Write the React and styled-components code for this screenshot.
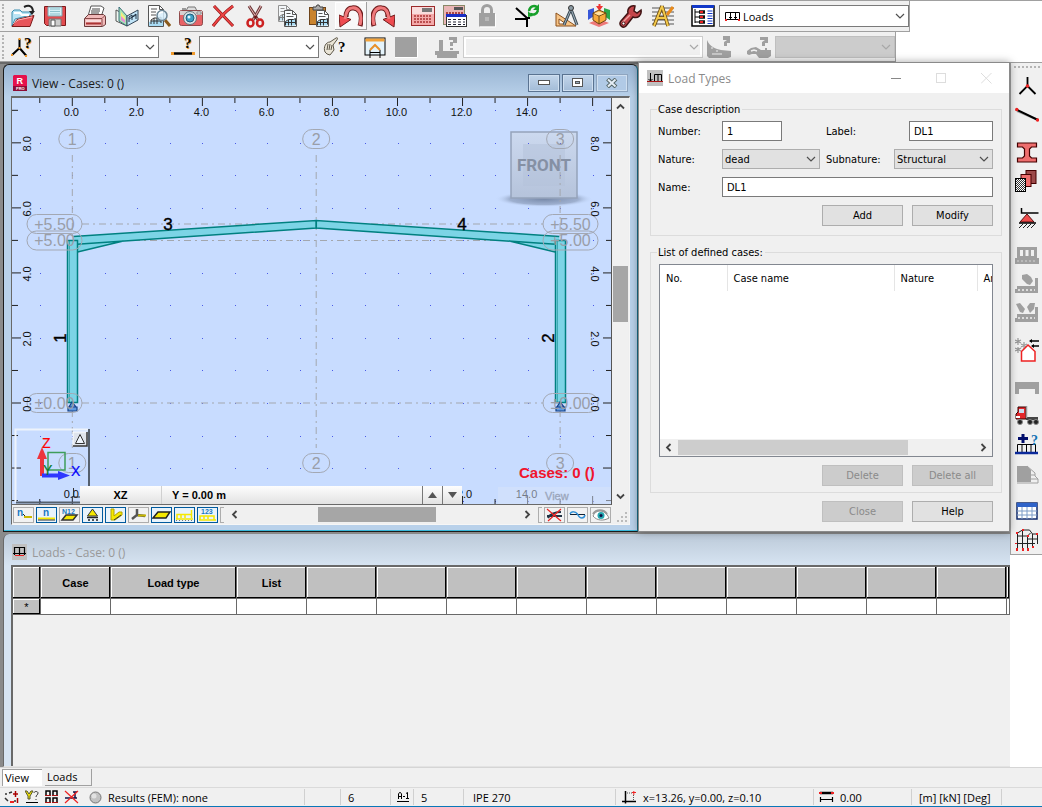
import React, { useState } from 'react'
import styled, { createGlobalStyle } from 'styled-components'

const GlobalStyle = createGlobalStyle`
  * { box-sizing: border-box; }
  body {
    margin: 0;
    background: #fff;
    color: #000;
    font-family: "Open Sans", "Noto Sans", sans-serif;
    font-size: 11px;
  }
  button, input, select { font: inherit; color: inherit; }
  svg { display: block; }
`

const Page = styled.div`
  display: flex;
  flex-direction: column;
  min-height: 100vh;
  border-top: 1px solid #a0a0a0;
`

/* ---------- toolbars ---------- */

const Toolbar = styled.div`
  display: flex;
  align-items: center;
  align-self: flex-start;
  height: ${p => p.$height}px;
  background: #f0f0f0;
  border-right: 1px solid #a0a0a0;
  border-bottom: 1px solid #a0a0a0;
`

const Grip = styled.div`
  width: 5px;
  height: 24px;
  border-left: 2px dotted #b4b4b4;
  margin-left: 2px;
`

const Group = styled.div`
  display: flex;
  align-items: center;
  margin-right: ${p => (p.$last ? 0 : 8)}px;
`

const ToolButton = styled.button`
  display: flex;
  align-items: center;
  justify-content: center;
  width: 32px;
  height: 28px;
  padding: 0;
  border: 0;
  background: ${p => (p.$raised ? '#f8f8f8' : 'transparent')};
  box-shadow: ${p => (p.$raised ? 'inset -1px -1px #a0a0a0, inset 1px 1px #fff' : 'none')};
`

const SelectBox = styled.div`
  position: relative;
  width: ${p => p.$width}px;
  height: ${p => p.$height || 22}px;
`

const SelectField = styled.select`
  width: 100%;
  height: 100%;
  appearance: none;
  border: 1px solid ${p => p.$border || '#7a7a7a'};
  border-radius: 0;
  padding: 0 20px 0 ${p => p.$indent || 3}px;
  background: ${p => p.$fill || '#fff'};
  box-shadow: ${p => (p.$inset ? 'inset 0 0 0 2px #fff' : 'none')};
  opacity: 1;
`

const SelectArrow = styled.svg`
  position: absolute;
  right: 4px;
  top: 50%;
  margin-top: -4px;
  pointer-events: none;
`

const SelectIcon = styled.span`
  position: absolute;
  left: 6px;
  top: 6px;
  pointer-events: none;
`

function Select({ width, height, label, value, icon, indent, disabled, fill, border, inset, id }) {
  return (
    <SelectBox $width={width} $height={height}>
      <SelectField id={id} aria-label={label} disabled={disabled} $fill={fill} $border={border} $indent={indent} $inset={inset}>
        <option>{value}</option>
      </SelectField>
      {icon && <SelectIcon>{icon}</SelectIcon>}
      <SelectArrow width="10" height="8" viewBox="0 0 10 8">
        <path d="M1 2l4 4 4-4" fill="none" stroke={disabled ? '#a8a8a8' : '#505050'} strokeWidth="1.2" />
      </SelectArrow>
    </SelectBox>
  )
}

/* ---------- icons ---------- */

function Glyph({ size = 24, children }) {
  return <svg width={size} height={size} viewBox="0 0 24 24" aria-hidden="true">{children}</svg>
}

// portal frame stamp that is printed on most of the document icons
const Frame = ({ x, y }) => (
  <path d={`M${x} ${y + 7}v-4l3-2h5l2-1v6M${x + 3} ${y + 1}v6M${x + 6} ${y + 1}v6M${x} ${y + 4}h10`} fill="none" stroke="#333" strokeWidth="1" />
)

const OpenIcon = () => (
  <Glyph>
    <path d="M1 22V8l2-2h6l2 2h9v3l-16 4z" fill="#b9e4f5" stroke="#3c8fb0" />
    <path d="M3 9h6l2 2h7" fill="none" stroke="#fff" strokeWidth="2" />
    <path d="M1 22.500l5-7 17-4-4 11z" fill="#e8565b" stroke="#7c1a1a" />
    <path d="M2 20l5-4 14-3" stroke="#ffb6b6" fill="none" />
    <path d="M13 3c6-3 9 0 9 5" fill="none" stroke="#222" strokeWidth="2" />
    <path d="M18 7h6l-3 4z" fill="#222" />
  </Glyph>
)
const SaveIcon = () => (
  <Glyph>
    <path d="M1.500 2.500h21v19H3.500l-2-2z" fill="#e34c50" stroke="#7c1a1a" />
    <path d="M5 3h14v9H5z" fill="#d5f0f6" stroke="#7ba7b0" />
    <path d="M7 5h10M7 7.500h10M7 10h10" stroke="#8cc0cc" />
    <path d="M6 15h12v7H6z" fill="#ccc" stroke="#777" />
    <path d="M8 16h4v6H8z" fill="#fff" stroke="#555" />
  </Glyph>
)
const PrintIcon = () => (
  <Glyph>
    <path d="M5 12l3-10h10l3 2-3 9z" fill="#fff" stroke="#555" />
    <path d="M9 5h8M8 7h9M8 9h8" stroke="#444" />
    <path d="M1.500 14.500l4-4h15l2 2v8l-3 2h-18z" fill="#f1b9b9" stroke="#6b3a3a" />
    <path d="M2 14.500h17l3-3M19 15v7" fill="none" stroke="#8b4a4a" />
    <path d="M3 17h15" stroke="#fff" /><path d="M3 19.500h15" stroke="#a33" strokeWidth="2" />
  </Glyph>
)
const BookIcon = () => (
  <Glyph>
    <path d="M1 6l6 3 5 9v4L1 17z" fill="#eef7f0" stroke="#555" />
    <path d="M4 3l8 9v10L4 17z" fill="#a5e6b4" stroke="#3c6c7c" />
    <path d="M6 8l4 5v5l-4-3z" fill="#f6ea7d" /><path d="M6 12l4 4v3l-4-3z" fill="#e98ed6" />
    <path d="M12 12l11-6v10l-11 6z" fill="#bfe3f7" stroke="#345" />
    <path d="M14 18v-5l3-2v5M17 13l4-3v5M14 15l7-4" stroke="#234" fill="none" />
  </Glyph>
)
const PreviewIcon = () => (
  <Glyph>
    <path d="M1.500 1.500h11l4 4v17h-15z" fill="#fdfdfd" stroke="#555" />
    <path d="M2 18l14-5v9H2z" fill="#a9dcf5" />
    <path d="M12.500 1.500v4h4M4 5h6M4 8h5M4 11h5" stroke="#555" fill="none" />
    <Frame x={4} y={13} />
    <path d="M18 16l5 6" stroke="#8a5a1c" strokeWidth="3" />
    <circle cx="15" cy="11.500" r="5" fill="#d8effb" fillOpacity=".85" stroke="#6b8494" strokeWidth="1.500" />
    <path d="M12 10c1-2 3-2 4-2" stroke="#fff" fill="none" strokeWidth="1.500" />
  </Glyph>
)
const CameraIcon = () => (
  <Glyph>
    <path d="M7 7l2-4h7l2 4z" fill="#ddd" stroke="#777" />
    <path d="M3 4h4v2H3z" fill="#999" />
    <rect x=".5" y="6.500" width="23" height="15" rx="2" fill="#e76266" stroke="#8f4a4a" />
    <path d="M1 7h22v4H1z" fill="#d8d0d0" /><path d="M18 8h4v2h-4z" fill="#fff" stroke="#888" />
    <circle cx="11" cy="14" r="6.500" fill="#d9e6ea" stroke="#64747a" />
    <circle cx="11" cy="14" r="4" fill="#3f9fc4" stroke="#1f5f7c" /><circle cx="10" cy="13" r="1.500" fill="#dff6ff" />
  </Glyph>
)
const DeleteIcon = () => (
  <Glyph>
    <path d="M3 2l19 20M22 2C14 8 8 14 2 22" stroke="#8e1515" strokeWidth="3" fill="none" />
    <path d="M3 2l19 20M22 2C14 8 8 14 2 22" stroke="#ee4444" strokeWidth="1.800" fill="none" />
  </Glyph>
)
const CutIcon = () => (
  <Glyph>
    <path d="M6 2l9 14M18 2L10 16" stroke="#6d3b3b" strokeWidth="3" />
    <path d="M6 2l9 14M18 2L10 16" stroke="#e9b4b4" strokeWidth="1" />
    <ellipse cx="7.500" cy="19" rx="3" ry="3.500" fill="none" stroke="#c22" strokeWidth="2.500" />
    <ellipse cx="17" cy="19" rx="3" ry="3.500" fill="none" stroke="#c22" strokeWidth="2.500" />
    <circle cx="12.500" cy="13" r="1.500" fill="#611" />
  </Glyph>
)
const Sheet = ({ x, y }) => (
  <g>
    <path d={`M${x} ${y}h8l4 4v12h-12z`} fill="#f8fcff" stroke="#555" />
    <path d={`M${x + 1} ${y + 11}l10-3v7h-10z`} fill="#a9dcf5" />
    <path d={`M${x + 8} ${y}v4h4M${x + 2} ${y + 3}h4M${x + 2} ${y + 6}h7`} stroke="#555" fill="none" />
    <Frame x={x + 1} y={y + 8} />
  </g>
)
const CopyIcon = () => <Glyph><g opacity=".6"><Sheet x={3.5} y={1.5} /></g><Sheet x={9.5} y={6.5} /></Glyph>
const PasteIcon = () => (
  <Glyph>
    <rect x="2.500" y="3.500" width="16" height="17" fill="#c9842f" stroke="#6d431a" />
    <path d="M6 6V3h3l1-2h2l1 2h3v3z" fill="#aaa" stroke="#444" />
    <Sheet x={9.5} y={6.5} />
  </Glyph>
)
const ArrowShape = () => (
  <g>
    <path d="M21 22C25 9 19 3 13 4 9 4 7 8 7 13" stroke="#701c1c" strokeWidth="5" fill="none" />
    <path d="M0 11l12 4.500L1 23z" fill="#ee4b50" stroke="#701c1c" />
    <path d="M21 21C24 9 19 3 13 4 9 4 7 8 6 15" stroke="#f0797b" strokeWidth="3" fill="none" />
  </g>
)
const UndoIcon = () => <Glyph><ArrowShape /></Glyph>
const RedoIcon = () => <Glyph><g transform="matrix(-1 0 0 1 24 0)"><ArrowShape /></g></Glyph>
const CalcIcon = () => (
  <Glyph>
    <rect x=".5" y="2.500" width="23" height="19" fill="#f3a9a9" stroke="#9c2a2a" />
    <path d="M1 3h22v7H1z" fill="#f9dcdc" /><path d="M11 4h10v4H11z" fill="#777" />
    <path d="M3 12h18M3 15h18M3 18h18" stroke="#a33" strokeWidth="1.500" strokeDasharray="2 1" />
  </Glyph>
)
const CalcTableIcon = () => (
  <Glyph>
    <rect x=".5" y="1.500" width="21" height="19" fill="#e9b5b5" stroke="#886" />
    <path d="M11 3h9v3h-9z" fill="#555" /><path d="M3 9h18" stroke="#a44" strokeWidth="2" strokeDasharray="2 1" />
    <rect x="3.500" y="11.500" width="20" height="11" fill="#fff" stroke="#333" />
    <path d="M3 10h20v3H3z" fill="#1a2fc4" />
    <path d="M5 15.500h17M5 18h17M5 20.500h17" stroke="#223" strokeDasharray="3 2" />
  </Glyph>
)
const LockIcon = () => (
  <Glyph>
    <path d="M4 9h16v13.500H4z" fill="#a0a0a0" />
    <path d="M7.500 10V6c0-6 9-6 9 0v4" fill="none" stroke="#a0a0a0" strokeWidth="3" />
    <path d="M20.500 10v13H5" stroke="#fff" fill="none" /><path d="M10 13h4v4h-4z" fill="#b9b9b9" />
  </Glyph>
)
const RefreshNodeIcon = () => (
  <Glyph>
    <path d="M1 4l11 10M0 15h12v8M12 14h3" fill="none" stroke="#000" strokeWidth="2" />
    <path d="M14 7c1-5 5-6 8-4M23 6c-1 5-5 5-8 4" fill="none" stroke="#17a02a" strokeWidth="2.500" />
    <path d="M24 0v6h-6zM13 13V7l5 5z" fill="#17a02a" />
  </Glyph>
)
const DraftIcon = () => (
  <Glyph>
    <path d="M1 9v13h20z" fill="#f7c486" stroke="#8a4f1a" /><path d="M4 15v5h7z" fill="#fff" stroke="#8a4f1a" />
    <path d="M16 5L9 21M16 5l6 16" stroke="#3d4b55" strokeWidth="3" /><path d="M16 5L9 21M16 5l6 16" stroke="#9eb0bb" strokeWidth="1" />
    <circle cx="16" cy="4" r="2.500" fill="#8b9aa3" stroke="#333" />
  </Glyph>
)
const CubeIcon = () => (
  <Glyph>
    <path d="M1 6l6-2v8l-6 4z" fill="#3757d8" /><path d="M23 6l-6-2v8l6 4z" fill="#2aa84b" />
    <path d="M9 2h7l-3.500 5zM11.500 0h2v3h-2z" fill="#e33" /><path d="M12 23l-10-4 10-4 10 4z" fill="#ee7878" />
    <path d="M6 9l6-3 7 3v7l-7 4-6-4z" fill="#f7a93a" stroke="#6b4613" /><path d="M6 9l6 3 7-3M12 12v8" stroke="#6b4613" fill="none" />
    <path d="M7 9.500l5-2 5 2-5 2z" fill="#ffe0a0" />
  </Glyph>
)
const WrenchIcon = () => (
  <Glyph>
    <path d="M22 6l-4 3-3-2 1-5c-5-1-8 3-7 7L2 17c-3 4 2 8 5 5l7-9c5 2 9-2 8-7z" fill="#c4454a" stroke="#401414" strokeWidth="1.500" />
    <path d="M11 11l-8 8" stroke="#f2a1a1" strokeWidth="1.500" /><circle cx="4.500" cy="19.500" r="1.500" fill="#fff" stroke="#401414" />
  </Glyph>
)
const LetterRulerIcon = () => (
  <Glyph>
    <path d="M1 4h22M1 8h22M1 12h22M1 16h22M1 20h22" stroke="#555" strokeWidth="1" />
    <path d="M11 2L3 22M11 2l6 20M6 14h9" stroke="#6b4a10" strokeWidth="3.500" fill="none" />
    <path d="M11 2L3 22M11 2l6 20M6 14h9" stroke="#f3c94a" strokeWidth="2" fill="none" />
    <path d="M22 3l-6 8" stroke="#e88a1c" strokeWidth="3" />
  </Glyph>
)
const InspectorIcon = () => (
  <Glyph>
    <rect x="1" y="2" width="22" height="20" fill="#fff" stroke="#000" strokeWidth="1.500" /><path d="M1 1h22v3H1z" fill="#1238c8" />
    <path d="M4 5v14M4 8h4M4 13h4M4 18h4" stroke="#000" fill="none" />
    <path d="M8 8h6M8 13h6M8 18h6" stroke="#111" strokeWidth="3.500" /><path d="M9 8h3M9 13h3M9 18h3" stroke="#e22" strokeWidth="2" />
    <path d="M16.500 7h5M16.500 9.500h5M16.500 12h5M16.500 14.500h5M16.500 17h5M16.500 19.500h5" stroke="#1238c8" />
  </Glyph>
)
const LoadsSmallIcon = () => (
  <svg width="16" height="12" viewBox="0 0 16 12">
    <path d="M.5 9V1.500h14V9M5.500 2v6M10.500 2v6M0 8.500h15" stroke="#000" fill="none" />
    <path d="M4 6.500h3M9 6.500h3" stroke="#000" />
    <path d="M0 8h2v2H0zM13 8h2v2h-2z" fill="#e22" />
  </svg>
)

const Query = ({ x, y, size = 17, color = '#f09a2c' }) => (
  <g fontFamily="Liberation Serif, serif" fontWeight="bold" fontSize={size}>
    <text x={x + 1} y={y + 1} fill={color}>?</text>
    <text x={x} y={y} fill="#000">?</text>
  </g>
)
const NodeQueryIcon = () => (
  <Glyph>
    <path d="M8.500 4v9L1 20M8.500 13l7 8" stroke="#000" strokeWidth="2" fill="none" />
    <path d="M7.500 12h2v2h-2zM0 19h2v2H0zM14 20h2v2h-2zM7.500 3h2v2h-2z" fill="#f09a2c" />
    <Query x={13} y={13} size={15} />
  </Glyph>
)
const BarQueryIcon = () => (
  <Glyph><path d="M1 18.500h22" stroke="#000" strokeWidth="2.500" /><path d="M0 17h3v3H0zM21 17h3v3h-3z" fill="#f09a2c" /><Query x={13} y={13} size={15} /></Glyph>
)
const HandQueryIcon = () => (
  <Glyph>
    <path d="M2 17c-2-5 1-10 5-10l6-4c2-1 2 1 0 3l-3 4 1 5-4 5-3-1z" fill="#e9e4d6" stroke="#5c5648" />
    <path d="M5 9l-1 6M7 9l-1 6M9 10l-1 5" stroke="#5c5648" fill="none" />
    <text x="15" y="17" fontFamily="Liberation Serif, serif" fontWeight="bold" fontSize="15">?</text>
  </Glyph>
)
const WindowFrameIcon = () => (
  <Glyph>
    <rect x="2" y="3" width="20" height="17" fill="#e4f3fb" stroke="#000" /><path d="M2.500 3.500h19v3h-19z" fill="#f3a33a" />
    <path d="M7 23v-8l5-5 5 5v8M7 17.500h10" stroke="#000" fill="none" /><path d="M7 15l5-5 5 5" stroke="#e8912a" fill="none" strokeWidth="2" />
  </Glyph>
)
const GreySquareIcon = () => <Glyph><path d="M0 2h22v20H0z" fill="#a0a0a0" /><path d="M22.500 2v20.500H0" stroke="#fff" fill="none" /></Glyph>
const GreyQueryBarIcon = () => (
  <Glyph>
    <path d="M0 16h24v3h-2v4H2v-3H0zM4 5h4v12H4z" fill="#a0a0a0" />
    <path d="M14 2h8v6h-4v3h-3V7h3V5h-4zM15 13h3v2h-3z" fill="#a0a0a0" />
  </Glyph>
)
const GreySlopeIcon = () => (
  <Glyph>
    <path d="M0 5c3 7 9 9 14 10l10 1v6l-3 1H2l-2-2z" fill="#a0a0a0" />
    <path d="M16 1h7v7h-3v3h-3V7l3-2h-4z" fill="#a0a0a0" /><path d="M4 13h2M9 16h2M5 19h10" stroke="#eee" />
  </Glyph>
)
const GreyArchIcon = () => (
  <Glyph>
    <path d="M0 16l4-3 5-1 5 3h4v-2h2v2h4v6l-3 2h-9l-3-4H5l-3 1-2-1z" fill="#a0a0a0" /><path d="M13 2h8v6h-3v3h-3V7l3-2h-5z" fill="#a0a0a0" />
    <path d="M4 16l3-1 3 1" stroke="#f0f0f0" strokeWidth="1.500" fill="none" />
  </Glyph>
)

// vertical toolbar
const NodeIcon = () => (
  <Glyph><path d="M12.500 3v9l-8 8M12.500 12l8 8" stroke="#000" strokeWidth="1.800" fill="none" /><circle cx="12.500" cy="12" r="1.800" fill="#e22" /></Glyph>
)
const BarIcon = () => (
  <Glyph><path d="M2 8l21 9" stroke="#aaa" strokeWidth="2" /><path d="M1 6.500L23 17" stroke="#000" strokeWidth="2" /><circle cx="1.800" cy="6.500" r="1.700" fill="#e22" /><circle cx="22.500" cy="17" r="1.700" fill="#e22" /></Glyph>
)
const SectionIcon = () => (
  <Glyph><path d="M2.500 3h19v4h-5l-2 2v7l2 2h5v4h-19v-4h5l2-2V9l-2-2h-5z" fill="#ee6e6e" stroke="#400" strokeWidth="1.200" /></Glyph>
)
const ThicknessIcon = () => (
  <Glyph>
    <rect x="11" y="1.500" width="10" height="13" fill="#9d4a4a" stroke="#400" /><rect x="6" y="5.500" width="10" height="12" fill="#ee6e6e" stroke="#400" />
    <rect x=".5" y="9.500" width="10" height="13" fill="#fff" stroke="#000" />
    <path d="M1 10.500h9M1 12.500h9M1 14.500h9M1 16.500h9M1 18.500h9M1 20.500h9" stroke="#333" strokeDasharray="1 1" />
    <path d="M2 11.500h8M2 13.500h8M2 15.500h8M2 17.500h8M2 19.500h8M2 21.500h8" stroke="#333" strokeDasharray="1 1" />
  </Glyph>
)
const SupportIcon = () => (
  <Glyph>
    <path d="M6.500 2v5h17" stroke="#000" strokeWidth="1.500" fill="none" />
    <path d="M12 8l7 8H5z" fill="#ee4b4b" stroke="#511" /><path d="M4 17h17" stroke="#000" strokeWidth="1.500" />
    <path d="M8 18l-4 4M12 18l-4 4M16 18l-4 4M20 18l-4 4" stroke="#222" />
  </Glyph>
)
const GreyLoadIcon = () => (
  <Glyph><path d="M2 4h20v11h2v6H0v-6h2z" fill="#a0a0a0" /><path d="M5 7h3v6H5zM10.500 7h3v6h-3zM16 7h3v6h-3z" fill="#f0f0f0" /><path d="M2 18h20" stroke="#d4d4d4" strokeDasharray="2 2" /></Glyph>
)
const GreyCaseIcon = () => (
  <Glyph>
    <path d="M7 3l5-1 4 3 2 4-3 4-3-1-5-5zM2 14h18V6h3v15H0v-4h2z" fill="#a0a0a0" />
    <path d="M3 18h17" stroke="#f0f0f0" strokeWidth="1.500" strokeDasharray="2 2" />
  </Glyph>
)
const GreyCaseAltIcon = () => (
  <Glyph>
    <path d="M1 3l4-1 5 6-2 4-3-1zM12 6l3-4h5l-1 6-4 4zM2 13h18V6h3v15H0v-4h2z" fill="#a0a0a0" />
    <path d="M3 17h17" stroke="#f0f0f0" strokeWidth="1.500" strokeDasharray="2 2" />
  </Glyph>
)
const SnowIcon = () => (
  <Glyph>
    <g stroke="#999" strokeWidth="1.200">
      <path d="M3 0v7M0 2l6 3M6 2L0 5M9 4v7M6 6l6 3M12 6L6 9M3 9v6M0 10l6 3M6 10l-6 3" />
    </g>
    <path d="M15 3h9M17 8h7" stroke="#000" strokeWidth="1.500" /><path d="M14 3l3-2v4zM16 8l3-2v4z" fill="#000" />
    <path d="M6.500 23V13.500L13 7l7 6.500V23z" fill="#fff" stroke="#e22" strokeWidth="1.500" />
  </Glyph>
)
const GreyBeamIcon = () => <Glyph><path d="M0 7h24v12h-4v-5H4v5H0z" fill="#a0a0a0" /></Glyph>
const TruckIcon = () => (
  <Glyph>
    <path d="M3 3h8v12H1V10l2-2z" fill="#e3262a" stroke="#300" /><path d="M4 5h5v4H4z" fill="#cde" /><path d="M11 13h12v3H11z" fill="#444" />
    <path d="M11.500 2v12" stroke="#999" strokeWidth="1.500" /><path d="M1 12h4v2H1z" fill="#fff" />
    <g fill="#222" stroke="#888"><circle cx="5" cy="18" r="2.500" /><circle cx="15" cy="18" r="2.500" /><circle cx="21" cy="18" r="2.500" /></g>
  </Glyph>
)
const AddLoadIcon = () => (
  <Glyph>
    <path d="M8 1v9M3 5.500h10" stroke="#000d6b" strokeWidth="3" />
    <path d="M2.500 19v-7.500h18V19M7 12v7M11.500 12v7M16 12v7" stroke="#000" fill="none" /><path d="M0 20h23" stroke="#0b2a9b" strokeWidth="2.500" />
    <text x="16" y="12" fontFamily="Liberation Serif, serif" fontWeight="bold" fontSize="14" fill="#1273b5">?</text>
  </Glyph>
)
const GreyDiagramIcon = () => (
  <Glyph><path d="M2 4h10l4 4v12H2z" fill="#a0a0a0" /><path d="M12 4l8 7v3l3 3v4H2M16 13h4M16 17h7" stroke="#a0a0a0" fill="none" /></Glyph>
)
const TableIcon = () => (
  <Glyph>
    <rect x="2" y="4" width="20" height="16" fill="#fff" stroke="#102a6b" strokeWidth="1.500" /><path d="M2 4h20v4H2z" fill="#2f63c9" />
    <path d="M2 12h20M2 16h20M7 8v12M12 8v12M17 8v12" stroke="#7d9cc8" />
  </Glyph>
)
const StructureIcon = () => (
  <Glyph>
    <path d="M2.500 22V5l5-3h7l3 4h5v10M2.500 8h10v14M7.500 2v20M12.500 8l3-3M0 15.500h20M17.500 6v14M12 11h10" stroke="#222" fill="none" />
    <path d="M1 4h2v2H1zM12 7h2v2h-2zM7 1h2v2H7zM21 5h2v2h-2zM1 20h2v3H1zM12 20h2v3h-2zM7 20h2v3H7zM17 18h2v2h-2zM0 15h2v1H0z" fill="#e22" />
  </Glyph>
)

/* ---------- MDI area ---------- */

const Main = styled.main`
  display: grid;
  grid-template-columns: minmax(0, 1fr) 32px;
  align-items: start;
  flex: 1;
`

const Desktop = styled.div`
  position: relative;
  display: flex;
  flex-direction: column;
  align-self: stretch;
  padding-left: 3px;
  background: #8a8a8a;
  border-top: 2px solid #696969;
`

const SideBar = styled.div`
  display: flex;
  flex-direction: column;
  align-items: center;
  padding: 3px 0 0;
  gap: 0;
  background: #f0f0f0;
  border: 1px solid #a0a0a0;
  border-width: 1px 0 1px 1px;
`

const SideGrip = styled.div`
  width: 26px;
  height: 5px;
  border-top: 2px dotted #b4b4b4;
`

const SideGroup = styled.div`
  margin-bottom: ${p => (p.$last ? 0 : 8)}px;
`

const SideButton = styled(ToolButton)`
  height: 29px;
  width: 31px;
`

const ViewWindow = styled.section`
  margin-right: 372px;
  padding: 0 7px 6px;
  border: 1px solid #1b1b1b;
  border-right-color: #1a6d86;
  border-radius: 6px 6px 0 0;
  background: linear-gradient(#98b4d2, #b9d1ea 32px);
  box-shadow: inset 0 -1px #38b7d8;
`

const TitleBar = styled.header`
  display: flex;
  align-items: center;
  gap: 5px;
  height: 31px;
  padding-top: 5px;
  padding-left: 1px;
  font-size: 12px;
  color: ${p => (p.$muted ? '#999' : '#1b1b1b')};
`

const WindowTitle = styled.h2`
  margin: 0;
  flex: 1;
  font-size: 12px;
  font-weight: normal;
`

const WindowButton = styled.button`
  display: flex;
  align-items: center;
  justify-content: center;
  width: 32px;
  height: 18px;
  padding: 0;
  margin-right: -3px;
  border: 1px solid ${p => (p.$faint ? '#8fa5bf' : '#5a7391')};
  background: ${p => (p.$faint ? '#b1cae6' : 'linear-gradient(#c3d6eb, #a2bbd7)')};
  box-shadow: inset 0 0 0 1px #cfdff0;
`

const ViewBody = styled.div`
  border: 1px solid #f6f6f6;
  border-top: 2px solid #696969;
  border-left: 1px solid #696969;
`

const CanvasRow = styled.div`
  display: grid;
  grid-template-columns: minmax(0, 1fr) 17px;
`

const Canvas = styled.div`
  position: relative;
  background: #c8dcff;
  border-bottom: 1px solid #696969;
  border-right: 1px solid #555;
`

const VerticalScroll = styled.div`
  display: flex;
  flex-direction: column;
  background: #f0f0f0;
`

const ScrollButton = styled.button`
  display: flex;
  align-items: center;
  justify-content: center;
  width: 17px;
  height: 17px;
  padding: 0;
  border: 0;
  background: #f0f0f0;
`

const Track = styled.div`
  display: flex;
  flex: 1;
  flex-direction: ${p => (p.$vertical ? 'column' : 'row')};
  padding: ${p => (p.$vertical ? '0 1px' : '1px 0')};
`

const Thumb = styled.div`
  flex: 0 0 ${p => p.$size};
  margin-${p => (p.$vertical ? 'top' : 'left')}: ${p => p.$start};
  background: ${p => p.$fill || '#a6a6a6'};
`

const LevelBar = styled.div`
  position: absolute;
  left: 68px;
  right: 149px;
  bottom: 0;
  display: flex;
  align-items: center;
  height: 18px;
  background: linear-gradient(#fdfdfd, #e2e2e2);
  font: bold 11px "Liberation Sans", sans-serif;
`

const LevelCell = styled.span`
  width: ${p => p.$width};
  flex: ${p => (p.$grow ? 1 : 'none')};
  padding-left: ${p => p.$indent || 0}px;
  text-align: ${p => (p.$center ? 'center' : 'left')};
  border-right: 1px solid ${p => p.$line};
  line-height: 18px;
`

const LevelButton = styled.button`
  width: 20px;
  height: 18px;
  padding: 0;
  border: 0;
  border-left: 1px solid #777;
  background: transparent;
  display: flex;
  align-items: center;
  justify-content: center;
`

const ViewTools = styled.div`
  display: flex;
  align-items: center;
  gap: 2px;
  height: 19px;
  padding-left: 1px;
  background: #f0f0f0;
`

const SmallTool = styled.button`
  display: flex;
  align-items: center;
  justify-content: center;
  width: 21px;
  height: 16px;
  padding: 0;
  border: 1px solid ${p => (p.$on ? '#005a9e' : '#adadad')};
  background: ${p => (p.$on ? '#e9f3fb' : '#f2f2f2')};
`

const SmallStub = styled.span`
  width: 4px;
  height: 16px;
  border: 1px solid #adadad;
  border-right: 0;
`

const HorizontalScroll = styled.div`
  display: flex;
  flex: 1;
  height: 17px;
`

const Chevron = ({ turn = 0 }) => (
  <svg width="9" height="9" viewBox="0 0 9 9"><path transform={`rotate(${turn} 4.5 4.5)`} d="M1 6.500l3.500-3.500L8 6.500" fill="none" stroke="#444" strokeWidth="1.800" /></svg>
)

/* ---------- structural drawing ---------- */

const UNIT = 32.52
const px = x => 72.3 + x * UNIT
const pz = z => 403 - z * UNIT
const range = (from, to) => Array.from({ length: to - from + 1 }, (_, i) => from + i)
const teal = '#008080'

function Bubble({ x, y, width, label }) {
  return (
    <g>
      <rect x={x - width / 2} y={y - 9.5} width={width} height="19" rx="9.500" fill="none" stroke="#a3a8b3" />
      <text x={x} y={y + 5.5} textAnchor="middle" fontSize="16" fill="#9a9ea8">{label}</text>
    </g>
  )
}

function Rafter({ side }) {
  // side 1 = left half, -1 = right half, mirrored about the ridge
  const at = d => 316.3 - side * d
  return (
    <g>
      <path d={`M${at(243)} 236.500L${at(0)} 220.500V228L${at(193)} 241L${at(243)} 253z`} fill="#7cd4e6" />
      <path
        d={`M${at(243)} 236.500L${at(0)} 220.500V228L${at(243)} 244.500M${at(243)} 253L${at(193)} 241`}
        fill="none" stroke={teal} strokeWidth="1.500"
      />
    </g>
  )
}

function Column({ x }) {
  return (
    <g>
      <rect x={x - 4.5} y="240.500" width="10" height="162" fill="#7cd4e6" stroke={teal} strokeWidth="1.500" />
      <path d={`M${x - 2.5} 241v161`} stroke={teal} strokeWidth=".5" />
      <path d={`M${x} 402l-3 5h7zM${x - 4} 407h9v4h-9z`} fill="#5f9ae0" stroke="#123f86" strokeWidth="1.200" />
    </g>
  )
}

function Drawing() {
  const rows = range(-3, 9)
  const cols = range(-1, 16)
  return (
    <svg viewBox="12 98 599 406" width="100%" fontFamily="Liberation Sans, Arial, sans-serif">
      <defs>
        <linearGradient id="cube" x1="0" y1="0" x2="0" y2="1">
          <stop offset="0" stopColor="#ccd9ef" /><stop offset="1" stopColor="#b5c3db" />
        </linearGradient>
        <radialGradient id="shade">
          <stop offset="0" stopColor="#7789a8" /><stop offset=".7" stopColor="#8c9dbb" stopOpacity=".7" /><stop offset="1" stopColor="#c8dcff" stopOpacity="0" />
        </radialGradient>
      </defs>

      <ellipse cx="544" cy="199" rx="49" ry="8" fill="url(#shade)" />
      <rect x="511" y="132" width="66" height="66" fill="url(#cube)" stroke="#95a3ba" strokeWidth="1.500" />
      <rect x="523" y="144" width="42" height="42" fill="#b4c2da" fillOpacity=".5" />
      <text x="544" y="171" textAnchor="middle" fontFamily="Liberation Sans Narrow, Roboto, sans-serif" fontWeight="bold" fontSize="17" fill="#8590a4">FRONT</text>

      {rows.map(z => cols.map(x => (
        <rect key={`${x}/${z}`} x={Math.round(px(x))} y={Math.round(pz(z))} width="1" height="1" fill="#4a5ae8" />
      )))}

      {cols.map(x => (
        <path key={x} d={`M${px(x)} 98v${x % 2 ? 5 : 8}M${px(x)} 504v${x % 2 ? -5 : -8}`} stroke="#222" />
      ))}
      {rows.map(z => (
        <path key={z} d={`M12 ${pz(z)}h${z % 2 ? 6 : 9}M611 ${pz(z)}h${z % 2 ? -5 : -8}`} stroke="#222" />
      ))}

      <g stroke="#a3a7ae" fill="none" strokeDasharray="7 4 2 4">
        {[0, 7.5, 15].map(x => <path key={x} d={`M${px(x)} 155V448`} />)}
        <path d="M82 224H543M82 240.500H543M82 403H543" />
      </g>

      <Rafter side={1} />
      <Rafter side={-1} />
      <Column x={72} />
      <Column x={560} />

      {[0, 7.5, 15].map((x, i) => (
        <g key={x}>
          <Bubble x={px(x)} y={139} width={27} label={i + 1} />
          <Bubble x={px(x)} y={463} width={27} label={i + 1} />
        </g>
      ))}
      {[[224, '+5.50'], [240.5, '+5.00'], [403, '±0.00']].map(([y, label]) => (
        <g key={label}>
          <Bubble x={54.5} y={y} width={55} label={label} />
          <Bubble x={570.5} y={y} width={55} label={label} />
        </g>
      ))}

      <g fontSize="11" fill="#111" textAnchor="middle">
        {[0, 2, 4, 6, 8, 10, 12, 14].map(x => <text key={x} x={px(x) - 1} y="116">{x.toFixed(1)}</text>)}
        {/* the level bar hides the rest of the lower scale */}
        {[0, 12, 14].map(x => <text key={x} x={px(x) - 1} y="498">{x.toFixed(1)}</text>)}
        {[0, 2, 4, 6, 8].map(z => (
          <g key={z}>
            <text transform={`translate(31 ${pz(z) + 1}) rotate(-90)`}>{z.toFixed(1)}</text>
            <text transform={`translate(591 ${pz(z) + 1}) rotate(90)`}>{z.toFixed(1)}</text>
          </g>
        ))}
      </g>

      <g fontSize="17" fill="#000" stroke="#000" strokeWidth=".4" textAnchor="middle">
        <text x="168" y="230">3</text>
        <text x="462" y="230">4</text>
        <text transform="translate(66 338) rotate(-90)">1</text>
        <text transform="translate(554 338) rotate(-90)">2</text>
      </g>

      <rect x="498" y="487" width="114" height="18" fill="#d7e4fa" fillOpacity=".5" />
      <text x="545" y="500" fontSize="11" fill="#9ba6bb" stroke="#9ba6bb" strokeWidth=".3">View</text>
      <text x="519" y="478" fontSize="15" fontWeight="bold" fill="#f0142c">Cases: 0 ()</text>

      <path d="M15.500 502V429.500H88" fill="none" stroke="#eef3fb" strokeWidth="2" />
      <path d="M16 502.500H89V429" fill="none" stroke="#55606e" strokeWidth="2" />
      <path d="M73 432h14v14H73z" fill="#dfe4ec" stroke="#fff" /><path d="M87 432v14H73" stroke="#333" fill="none" strokeWidth="1.500" />
      <path d="M75.500 443.500l4.500-9 4.500 9z" fill="#eef4fc" stroke="#333" />
      <path d="M73.500 488v9h7" fill="none" stroke="#333" />
      <rect x="48" y="452.500" width="17" height="17.500" fill="none" stroke="#3f9d5b" strokeWidth="1.500" />
      <path d="M42 476v-18" stroke="#ee343c" strokeWidth="4" /><path d="M37 459l5-12 5 12z" fill="#ee343c" />
      <path d="M42 475.500h18" stroke="#2f38ff" strokeWidth="4" /><path d="M58 471l12 4.500-12 4.500z" fill="#2f38ff" />
      <g fontSize="14" strokeWidth=".2">
        <text x="42" y="448" fill="#f00" stroke="#f00">Z</text>
        <text x="71" y="476" fill="#00f" stroke="#00f">X</text>
        <text x="43" y="475" fill="#0a7a2a" stroke="#0a7a2a">Y</text>
      </g>
    </svg>
  )
}

const Yellow = '#f5e800'
const SmallGlyph = ({ children }) => <svg width="19" height="14" viewBox="0 0 19 14" fontFamily="Liberation Sans, sans-serif" fontWeight="bold">{children}</svg>

const viewTools = [
  { name: 'Node numbers', art: <><text x="3" y="8" fontSize="10" fill="#1778c2">n</text><path d="M9 6l3 3" stroke="#222" /><path d="M10 9h8" stroke="#c8b800" strokeWidth="2" /></> },
  { name: 'Bar numbers', on: true, art: <><text x="6" y="8" fontSize="10" fill="#1778c2">n</text><path d="M1 10.500h17" stroke={Yellow} strokeWidth="2" /><path d="M1 12h17" stroke="#333" /></> },
  { name: 'Panel numbers', art: <><text x="2" y="6" fontSize="7" fill="#1778c2">N12</text><path d="M2 12l4-5h11l-4 5z" fill={Yellow} stroke="#333" strokeWidth="1.500" /></> },
  { name: 'Supports', on: true, art: <><path d="M9.500 1l5 7h-10z" fill={Yellow} stroke="#333" /><path d="M4 9.500h11M5 12h2M9 12h2M13 12h2" stroke="#222" strokeWidth="1.500" /></> },
  { name: 'Sections', on: true, art: <><path d="M5 1h3v7l5-4h3v3l-7 5H5z" fill={Yellow} stroke="#b3a300" /><path d="M8 12l7-5" stroke="#333" fill="none" /></> },
  { name: 'Local systems', art: <><path d="M8 1v6l-5 4M8 7l8 1" stroke="#555" strokeWidth="2.500" fill="none" /><path d="M9 7.500h8" stroke="#c8b800" strokeWidth="2" /></> },
  { name: 'Panel thickness', on: true, art: <path d="M1 10l5-6h12l-4 6z" fill={Yellow} stroke="#222" strokeWidth="1.500" /> },
  { name: 'Load symbols', on: true, art: <><path d="M2 10.500V6.500h14M6 10V7M10 10V7M16.500 10V2M1 11h17" stroke={Yellow} strokeWidth="1.500" fill="none" /><path d="M1 12.500h17" stroke="#777" strokeDasharray="1 2" /></> },
  { name: 'Load values', on: true, art: <><text x="3" y="6" fontSize="7" fill="#1778c2">123</text><path d="M2 11.500V8h14v4M6 11V8M10 11V8M1 12h17" stroke={Yellow} strokeWidth="1.500" fill="none" /></> },
]
const displayTools = [
  { name: 'Clear diagrams', art: <><path d="M2 8h15M3 10c3-6 10-6 13-6" stroke="#234" strokeWidth="2" fill="none" /><path d="M2 1l14 12M16 1L3 13" stroke="#e22" strokeWidth="1.200" /></> },
  { name: 'Deformation', art: <><path d="M2 6.500h15" stroke="#123" fill="none" /><path d="M2 6c1-3 6-3 8 1s6 4 7 0" stroke="#2f8fd6" fill="none" strokeWidth="1.500" /></> },
  { name: 'Display', art: <><path d="M2 8c3-7 12-7 16 2-5 3-12 3-16-2z" fill="#fff" stroke="#888" /><path d="M2 6c3-5 11-5 14 0" stroke="#999" strokeWidth="2" fill="none" /><circle cx="10" cy="7.500" r="3.500" fill="#22a7b0" /><circle cx="10" cy="7.500" r="1.500" fill="#114" /></> },
]

function ViewPane() {
  return (
    <ViewWindow>
      <TitleBar>
        <svg width="15" height="16" viewBox="0 0 15 16">
          <path d="M1 1l1-1h12l1 1v15H1z" fill="#e5114c" /><path d="M1 11h14v5H1z" fill="#8d0b35" />
          <text x="4.500" y="9" fontSize="9" fontWeight="bold" fontFamily="Liberation Sans, sans-serif" fill="#fff">R</text>
          <text x="4" y="15" fontSize="4" fontWeight="bold" fontFamily="Liberation Sans, sans-serif" fill="#fff">PRO</text>
        </svg>
        <WindowTitle>View - Cases: 0 ()</WindowTitle>
        <WindowButton aria-label="Minimize"><svg width="12" height="6"><rect x=".5" y=".5" width="11" height="4" fill="#fff" stroke="#555" /></svg></WindowButton>
        <WindowButton aria-label="Maximize"><svg width="12" height="10"><rect x=".5" y=".5" width="10" height="8" fill="#fff" stroke="#555" /><rect x="3.500" y="3.500" width="4" height="2" fill="#9ab" stroke="#555" /></svg></WindowButton>
        <WindowButton aria-label="Close" $faint><svg width="12" height="10"><path d="M1.500 1l8.500 8M10 1L1.500 9" stroke="#566" strokeWidth="4" /><path d="M2 1.500l7.500 7M9.500 1.500L2 8.500" stroke="#e6eef6" strokeWidth="2" /></svg></WindowButton>
        <span />
      </TitleBar>
      <ViewBody>
        <CanvasRow>
          <Canvas>
            <Drawing />
            <LevelBar>
              <LevelCell $width="82px" $center $line="#d0d0d0">XZ</LevelCell>
              <LevelCell $grow $indent={10} $line="transparent">Y = 0.00 m</LevelCell>
              <LevelButton aria-label="Level up"><svg width="9" height="6"><path d="M0 6l4.500-6L9 6z" fill="#555" /></svg></LevelButton>
              <LevelButton aria-label="Level down"><svg width="9" height="6"><path d="M0 0h9L4.500 6z" fill="#555" /></svg></LevelButton>
            </LevelBar>
          </Canvas>
          <VerticalScroll>
            <ScrollButton aria-label="Scroll up"><Chevron /></ScrollButton>
            <Track $vertical><Thumb $vertical $start="151px" $size="15%" /></Track>
            <ScrollButton aria-label="Scroll down"><Chevron turn={180} /></ScrollButton>
          </VerticalScroll>
        </CanvasRow>
        <ViewTools>
          {viewTools.map(t => <SmallTool key={t.name} aria-label={t.name} $on={t.on}><SmallGlyph>{t.art}</SmallGlyph></SmallTool>)}
          <SmallStub />
          <HorizontalScroll>
            <ScrollButton aria-label="Scroll left"><Chevron turn={-90} /></ScrollButton>
            <Track><Thumb $start="27%" $size="43%" /></Track>
            <ScrollButton aria-label="Scroll right"><Chevron turn={90} /></ScrollButton>
          </HorizontalScroll>
          <SmallStub />
          {displayTools.map(t => <SmallTool key={t.name} aria-label={t.name}><SmallGlyph>{t.art}</SmallGlyph></SmallTool>)}
          <svg width="16" height="16" viewBox="0 0 16 16"><path d="M12 5h2v2h-2zM12 9h2v2h-2zM12 13h2v2h-2zM8 9h2v2H8zM8 13h2v2H8zM4 13h2v2H4z" fill="#bbb" /></svg>
        </ViewTools>
      </ViewBody>
    </ViewWindow>
  )
}

/* ---------- loads table ---------- */

const LoadsWindow = styled.section`
  display: flex;
  flex-direction: column;
  flex: 1;
  margin-top: 2px;
  padding-left: 7px;
  border-left: 1px solid #696969;
  border-bottom: 1px solid #e3e3e3;
  border-radius: 6px 0 0 0;
  background: linear-gradient(#bccad9, #d7e4f2 32px);
`

const LoadsBody = styled.div`
  flex: 1;
  overflow: hidden;
  background: #f0f0f0;
  border-top: 2px solid #696969;
  border-left: 2px solid #696969;
`

const LoadsTable = styled.table`
  width: 100%;
  table-layout: fixed;
  border-collapse: separate;
  border-spacing: 0;
  font: bold 11px "Liberation Sans", sans-serif;
`

const HeadCell = styled.th`
  width: ${p => (p.$width ? `${p.$width}px` : 'auto')};
  height: ${p => p.$height || 32}px;
  padding: 0;
  background: #c0c0c0;
  border-right: 1px solid #696969;
  border-bottom: 1px solid #696969;
  box-shadow: inset -1px -1px #000, inset 1px 1px #fff;
  font-weight: ${p => (p.$light ? 'normal' : 'bold')};
`

const BodyCell = styled.td`
  padding: 0;
  background: #fff;
  border-right: 1px solid #696969;
  border-bottom: 1px solid #696969;
`

const columns = [
  { title: '', width: 28 },
  { title: 'Case', width: 70 },
  { title: 'Load type', width: 126 },
  { title: 'List', width: 70 },
  ...range(1, 10).map(() => ({ title: '', width: 70 })),
  { title: '' },
]

function LoadsPane() {
  return (
    <LoadsWindow>
      <TitleBar $muted>
        <svg width="15" height="16" viewBox="0 0 15 16">
          <path d="M0 0h15v16H0z" fill="#c0c0c0" /><path d="M2.500 11V3.500h10V11M7.500 4v7M1 9.500h13" stroke="#000" fill="none" strokeWidth="1.200" />
          <path d="M3 11.500h9" stroke="#e22" />
        </svg>
        <WindowTitle>Loads - Case: 0 ()</WindowTitle>
      </TitleBar>
      <LoadsBody>
        <LoadsTable>
          <thead>
            <tr>{columns.map((c, i) => <HeadCell key={i} $width={c.width}>{c.title}</HeadCell>)}</tr>
          </thead>
          <tbody>
            <tr>
              <HeadCell $height={16} $light>*</HeadCell>
              {columns.slice(1).map((c, i) => <BodyCell key={i} />)}
            </tr>
          </tbody>
        </LoadsTable>
      </LoadsBody>
    </LoadsWindow>
  )
}

/* ---------- load types dialog ---------- */

const Dialog = styled.section`
  position: absolute;
  top: -2px;
  right: 0;
  width: 372px;
  background: #f0f0f0;
  border: 1px solid #8a8a8a;
  box-shadow: 0 0 8px rgba(0, 0, 0, .35);
  font-family: "DejaVu Sans Condensed", "DejaVu Sans", sans-serif;
  font-size: 11px;
`

const DialogTitle = styled.header`
  display: flex;
  align-items: center;
  height: 30px;
  padding-left: 8px;
  background: #fff;
  color: #8a8a8a;
  font-family: "Open Sans", sans-serif;
  h2 { margin-left: 5px; }
`

const CaptionButton = styled.button`
  display: flex;
  width: 45px;
  justify-content: center;
  padding: 0;
  border: 0;
  background: transparent;
`

const DialogForm = styled.form`
  padding: 9px 7px 9px 11px;
`

const FieldGroup = styled.fieldset`
  margin: 0 0 ${p => p.$gap}px;
  padding: ${p => p.$top}px 8px ${p => p.$bottom}px ${p => p.$left || 8}px;
  min-width: 0;
  border: 1px solid #dcdcdc;
  legend {
    padding: 0 2px 0 1px;
    margin-left: ${p => (p.$left ? -1 : -2)}px;
    line-height: 15px;
  }
`

const FieldRow = styled.div`
  display: flex;
  align-items: center;
  margin-bottom: 8px;
`

const FieldLabel = styled.label`
  flex: ${p => (p.$grow ? 1 : '0 0 64px')};
`

const FieldCell = styled.div`
  width: 104px;
`

const TextField = styled.input`
  width: ${p => p.$width};
  height: 20px;
  padding: 0 4px;
  border: 1px solid #7a7a7a;
  border-radius: 0;
  background: #fff;
`

const ButtonRow = styled.div`
  display: flex;
  justify-content: flex-end;
  gap: 9px;
  padding-right: ${p => p.$inset || 0}px;
`

const PushButton = styled.button`
  width: 81px;
  height: 21px;
  padding: 0;
  background: #e1e1e1;
  border: 1px solid #adadad;
  &:disabled {
    color: #8a8a8a;
    background: #ccc;
    border-color: #bfbfbf;
  }
`

const CaseList = styled.div`
  display: flex;
  flex-direction: column;
  justify-content: space-between;
  height: 193px;
  margin-bottom: 8px;
  overflow: hidden;
  border: 1px solid #828790;
  background: #fff;
`

const CaseTable = styled.table`
  width: 400px;
  table-layout: fixed;
  border-collapse: collapse;
  th {
    height: 26px;
    padding: 0 6px;
    text-align: left;
    font-weight: normal;
    border-right: 1px solid #e5e5e5;
  }
`

const ListScroll = styled.div`
  display: flex;
  height: 17px;
  background: #f0f0f0;
`

function LoadTypesDialog() {
  const [number, setNumber] = useState('1')
  const [label, setLabel] = useState('DL1')
  const [name, setName] = useState('DL1')

  return (
    <Dialog role="dialog" aria-labelledby="dialog-title">
      <DialogTitle>
        <svg width="16" height="16" viewBox="0 0 16 16">
          <path d="M0 0h16v16H0z" fill="#c0c0c0" /><path d="M3.500 3v8M1.500 9l2 2 2-2M7.500 11V4.500h7V11M11 5v6" stroke="#000" fill="none" /><path d="M0 11.500h16" stroke="#a11" />
        </svg>
        <WindowTitle id="dialog-title">Load Types</WindowTitle>
        <CaptionButton aria-label="Minimize"><svg width="11" height="11"><path d="M0 5.500h10" stroke="#888" /></svg></CaptionButton>
        <CaptionButton aria-label="Maximize" disabled><svg width="11" height="11"><rect x=".5" y=".5" width="9" height="9" fill="none" stroke="#ddd" /></svg></CaptionButton>
        <CaptionButton aria-label="Close"><svg width="11" height="11"><path d="M0 0l10.500 10.500M10.500 0L0 10.500" stroke="#ddd" /></svg></CaptionButton>
      </DialogTitle>
      <DialogForm onSubmit={e => e.preventDefault()}>
        <FieldGroup $top={4} $bottom={9} $gap={9} $left={7}>
          <legend>Case description</legend>
          <FieldRow>
            <FieldLabel htmlFor="case-number">Number:</FieldLabel>
            <FieldCell><TextField id="case-number" $width="60px" value={number} onChange={e => setNumber(e.target.value)} /></FieldCell>
            <FieldLabel $grow htmlFor="case-label">Label:</FieldLabel>
            <TextField id="case-label" $width="84px" value={label} onChange={e => setLabel(e.target.value)} />
          </FieldRow>
          <FieldRow>
            <FieldLabel htmlFor="case-nature">Nature:</FieldLabel>
            <FieldCell><Select id="case-nature" width={98} height={20} value="dead" indent={2} fill="#e1e1e1" border="#adadad" /></FieldCell>
            <FieldLabel $grow htmlFor="case-subnature">Subnature:</FieldLabel>
            <Select id="case-subnature" width={99} height={20} value="Structural" indent={2} fill="#e1e1e1" border="#adadad" />
          </FieldRow>
          <FieldRow>
            <FieldLabel htmlFor="case-name">Name:</FieldLabel>
            <TextField id="case-name" $width="100%" value={name} onChange={e => setName(e.target.value)} />
          </FieldRow>
          <ButtonRow>
            <PushButton type="button">Add</PushButton>
            <PushButton type="button">Modify</PushButton>
          </ButtonRow>
        </FieldGroup>
        <FieldGroup $top={4} $bottom={6} $gap={8}>
          <legend>List of defined cases:</legend>
          <CaseList>
            <CaseTable>
              <colgroup><col width="67" /><col width="167" /><col width="83" /><col width="83" /></colgroup>
              <thead><tr><th>No.</th><th>Case name</th><th>Nature</th><th>Analysis</th></tr></thead>
            </CaseTable>
            <ListScroll>
              <ScrollButton type="button" aria-label="Scroll left"><Chevron turn={-90} /></ScrollButton>
              <Track><Thumb $start="1px" $size="230px" $fill="#cdcdcd" /></Track>
              <ScrollButton type="button" aria-label="Scroll right"><Chevron turn={90} /></ScrollButton>
            </ListScroll>
          </CaseList>
          <ButtonRow>
            <PushButton type="button" disabled>Delete</PushButton>
            <PushButton type="button" disabled>Delete all</PushButton>
          </ButtonRow>
        </FieldGroup>
        <ButtonRow $inset={9}>
          <PushButton type="button" disabled>Close</PushButton>
          <PushButton type="button">Help</PushButton>
        </ButtonRow>
      </DialogForm>
    </Dialog>
  )
}

/* ---------- bottom bars ---------- */

const Tabs = styled.nav`
  display: flex;
  gap: 3px;
  height: 20px;
  padding: 1px 2px;
  background: #f0f0f0;
  border-top: 1px solid #d5d5d5;
`

const Tab = styled.button`
  width: ${p => p.$width}px;
  height: 17px;
  padding: 0 2px;
  text-align: left;
  line-height: 14px;
  border: 1px solid #a0a0a0;
  border-width: ${p => (p.$active ? '1px 0 0 1px' : '0 1px 1px 0')};
  background: ${p => (p.$active ? '#fff' : '#f0f0f0')};
`

const StatusBar = styled.footer`
  display: flex;
  align-items: center;
  height: 20px;
  background: #f0f0f0;
  border-top: 1px solid #dadada;
  border-bottom: 1px solid #0a78b8;
`

const StatusCell = styled.div`
  display: flex;
  align-items: center;
  gap: 6px;
  height: 16px;
  flex: ${p => (p.$grow ? 1 : 'none')};
  width: ${p => p.$width || 0}px;
  padding-left: ${p => p.$indent || 0}px;
  white-space: nowrap;
  border-right: ${p => (p.$plain ? 0 : 1)}px solid #d0d0d0;
`

const StatusButton = styled.button`
  display: flex;
  padding: 0;
  border: 0;
  background: none;
`

const topGroups = [
  [['Open', OpenIcon], ['Save', SaveIcon]],
  [['Print', PrintIcon], ['Printout composition', BookIcon], ['Print preview', PreviewIcon], ['Screen capture', CameraIcon],
    ['Delete', DeleteIcon], ['Cut', CutIcon], ['Copy', CopyIcon], ['Paste', PasteIcon], ['Undo', UndoIcon, true], ['Redo', RedoIcon]],
  [['Calculations', CalcIcon], ['Calculation tables', CalcTableIcon], ['Lock results', LockIcon]],
  [['Update structure', RefreshNodeIcon]],
  [['Edit', DraftIcon], ['View', CubeIcon], ['Tools', WrenchIcon], ['Annotations', LetterRulerIcon]],
]

const sideGroups = [
  [['Nodes', NodeIcon], ['Bars', BarIcon]],
  [['Sections', SectionIcon], ['Thickness', ThicknessIcon]],
  [['Supports', SupportIcon]],
  [['Load definition', GreyLoadIcon], ['Load cases', GreyCaseIcon], ['Load objects', GreyCaseAltIcon]],
  [['Snow and wind', SnowIcon]],
  [['Beam loads', GreyBeamIcon], ['Moving loads', TruckIcon], ['Combinations', AddLoadIcon], ['Diagrams', GreyDiagramIcon]],
  [['Tables', TableIcon], ['Structure', StructureIcon]],
]

function App() {
  const [tab, setTab] = useState('View')

  return (
    <Page>
      <GlobalStyle />
      <Toolbar $height={31}>
        <Grip />
        {topGroups.map((group, i) => (
          <Group key={i}>
            {group.map(([name, Icon, raised]) => <ToolButton key={name} aria-label={name} $raised={raised}><Icon /></ToolButton>)}
          </Group>
        ))}
        <ToolButton aria-label="Object inspector"><InspectorIcon /></ToolButton>
        <Select width={190} label="Layout" value="Loads" icon={<LoadsSmallIcon />} indent={23} />
      </Toolbar>
      <Toolbar $height={30}>
        <Grip />
        <ToolButton aria-label="Select nodes"><NodeQueryIcon /></ToolButton>
        <Group><Select width={120} label="Node selection" value="" /></Group>
        <ToolButton aria-label="Select bars"><BarQueryIcon /></ToolButton>
        <Select width={120} label="Bar selection" value="" />
        <Group><ToolButton aria-label="Special selection"><HandQueryIcon /></ToolButton></Group>
        <Group>
          <ToolButton aria-label="Selection window"><WindowFrameIcon /></ToolButton>
          <ToolButton aria-label="Plane selection" disabled><GreySquareIcon /></ToolButton>
        </Group>
        <ToolButton aria-label="Select case" disabled><GreyQueryBarIcon /></ToolButton>
        <Select width={240} label="Case selection" value="" disabled fill="#f0f0f0" border="#ccc" inset />
        <Group><ToolButton aria-label="Select mode" disabled><GreySlopeIcon /></ToolButton></Group>
        <ToolButton aria-label="Select component" disabled><GreyArchIcon /></ToolButton>
        <Select width={120} label="Mode selection" value="" disabled fill="#ccc" border="#bfbfbf" />
      </Toolbar>
      <Main>
        <Desktop>
          <ViewPane />
          <LoadsPane />
          <LoadTypesDialog />
        </Desktop>
        <SideBar>
          <SideGrip />
          {sideGroups.map((group, i) => (
            <SideGroup key={i} $last={i === sideGroups.length - 1}>
              {group.map(([name, Icon]) => <SideButton key={name} aria-label={name}><Icon /></SideButton>)}
            </SideGroup>
          ))}
        </SideBar>
      </Main>
      <Tabs>
        <Tab $width={40} $active={tab === 'View'} onClick={() => setTab('View')}>View</Tab>
        <Tab $width={47} $active={tab === 'Loads'} onClick={() => setTab('Loads')}>Loads</Tab>
      </Tabs>
      <StatusBar>
        <StatusCell $width={86} $indent={4} $plain>
          <StatusButton aria-label="Snap settings"><svg width="15" height="14" viewBox="0 0 15 14"><path d="M1 4h2M5 3l3-1M1 8l3 3M10 11h2" stroke="#333" strokeWidth="1.500" /><path d="M9 4h5M11.500 1v6M13.500 8v5" stroke="#a00" strokeWidth="1.500" /><path d="M6 12h4" stroke="#e22" strokeWidth="2" /></svg></StatusButton>
          <StatusButton aria-label="Display attributes"><svg width="14" height="14" viewBox="0 0 14 14"><path d="M0 1h2l2 3 2-3h2L5 6v3H3V6z" fill={Yellow} stroke="#553" /><path d="M1 12.500h12" stroke="#000" /><path d="M9 3c0-2 4-2 4 0s-2 2-2 4M11 9v1" stroke="#333" fill="none" /></svg></StatusButton>
          <StatusButton aria-label="Windows"><svg width="13" height="14" viewBox="0 0 13 14"><path d="M1 5V1h4v4M8 5V1h4v4M1 12V8h4v4M8 12V8h4v4" stroke="#000" strokeWidth="1.500" fill="none" /><path d="M0 5.500h6M7 5.500h6M0 12.500h6M7 12.500h6" stroke="#a11" /></svg></StatusButton>
          <StatusButton aria-label="Hide results"><svg width="15" height="14" viewBox="0 0 15 14"><path d="M1 8h12M9 2h4M11 2v6" stroke="#114" strokeWidth="1.500" /><path d="M1 1l13 12M14 1L1 13" stroke="#e22" strokeWidth="1.200" /></svg></StatusButton>
        </StatusCell>
        <StatusCell $width={219} $indent={3}>
          <svg width="13" height="13"><circle cx="6.500" cy="6.500" r="5.500" fill="#c2c2c2" stroke="#777" /><circle cx="5" cy="5" r="2.500" fill="#e2e2e2" /></svg>
          <span>Results (FEM): none</span>
        </StatusCell>
        <StatusCell $width={36} />
        <StatusCell $width={50} $indent={7}>6</StatusCell>
        <StatusCell $width={23} $indent={6}>
          <svg width="13" height="12" viewBox="0 0 13 12"><path d="M1.500 8V3l1-1.500h1L4.500 3v5M1 5.500h4M6 5.500h2M9 2.500l1.500-1V8M9 7.500h3" stroke="#000" fill="none" /><path d="M0 10.500h12" stroke="#000" /></svg>
        </StatusCell>
        <StatusCell $width={50} $indent={7}>5</StatusCell>
        <StatusCell $grow $indent={9}>IPE 270</StatusCell>
        <StatusCell $width={198} $indent={6}>
          <svg width="15" height="14" viewBox="0 0 15 14"><path d="M3.500 1v12.500M0 11.500h14" stroke="#000" strokeWidth="1.500" /><path d="M5 3h5M11.500 5v6" stroke="#555" strokeDasharray="1 1" /><path d="M10 2.500h4M11.800 1v4" stroke="#e22" /></svg>
          <span>x=13.26, y=0.00, z=0.10</span>
        </StatusCell>
        <StatusCell $width={98} $indent={5}>
          <svg width="15" height="12" viewBox="0 0 15 12"><path d="M1 2h13" stroke="#000" strokeWidth="2.500" /><path d="M0 1h3v2H0zM12 1h3v2h-3z" fill="#e22" /><path d="M1 8.500h13M1.500 6v5M13.500 6v5" stroke="#000" strokeWidth="1.200" /></svg>
          <span>0.00</span>
        </StatusCell>
        <StatusCell $width={90} $indent={7}>[m] [kN] [Deg]</StatusCell>
        <StatusCell $width={40} $plain />
      </StatusBar>
    </Page>
  )
}

export default App
